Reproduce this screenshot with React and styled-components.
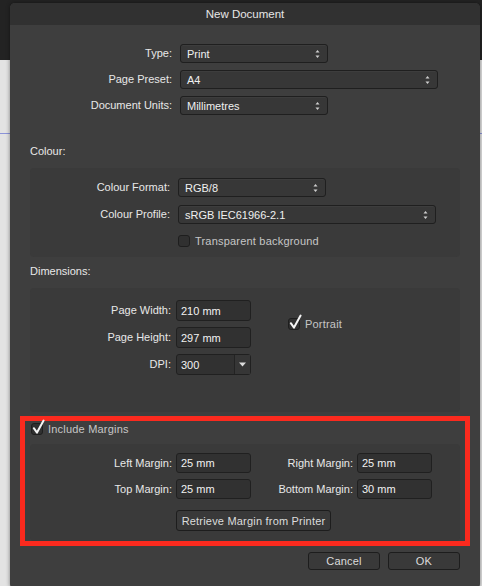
import React from "react";
import styled, { createGlobalStyle } from "styled-components";

const GlobalStyle = createGlobalStyle`
  html, body {
    margin: 0;
    padding: 0;
    background: #232323;
  }
  * { box-sizing: border-box; }
`;

const Backdrop = styled.div`
  width: 482px;
  height: 586px;
  overflow: hidden;
  padding: 3px 2px 0 10px;
  background: linear-gradient(
    to bottom,
    #232323 0 60px,
    #e3e3e3 60px 133px,
    #8b93d8 133px 134px,
    #e3e3e3 134px
  );
  font-family: "Liberation Sans", Arial, sans-serif;
  font-size: 11px;
`;

const Dialog = styled.div`
  width: 470px;
  height: 586px;
  background: #3e3e3e;
  border-radius: 5px;
  box-shadow: 0 0 4px rgba(0, 0, 0, 0.45);
  display: flex;
  flex-direction: column;
  overflow: hidden;
`;

const TitleBar = styled.div`
  height: 22px;
  flex: none;
  background: #313131;
  color: #e6e6e6;
  display: flex;
  align-items: center;
  justify-content: center;
  font-size: 11.5px;
`;

const Body = styled.div`
  display: flex;
  flex-direction: column;
  padding: 19px 20px 0;
`;

const FormGrid = styled.div`
  display: grid;
  grid-template-columns: ${(p) => p.$cols};
  column-gap: ${(p) => p.$colGap}px;
  row-gap: ${(p) => p.$rowGap}px;
  align-items: center;
  justify-items: start;
`;

const Label = styled.div`
  justify-self: end;
  color: #e8e8e8;
  white-space: nowrap;
  line-height: 13px;
`;

const SelectBox = styled.div`
  width: ${(p) => p.$width}px;
  height: 19px;
  background: #373737;
  border: 1px solid #1f1f1f;
  border-radius: 3px;
  color: #f0f0f0;
  display: flex;
  align-items: center;
  justify-content: space-between;
  padding: 0 7px 0 6px;
  box-shadow: inset 0 1px 0 rgba(255, 255, 255, 0.03);
`;

const SectionTitle = styled.div`
  margin-top: ${(p) => p.$top}px;
  margin-bottom: 10px;
  line-height: 14px;
  color: #e8e8e8;
`;

const GroupBox = styled.div`
  background: #3a3a3a;
  border-radius: 4px;
  padding: ${(p) => p.$pad};
  margin-top: ${(p) => p.$top || 0}px;
`;

const CheckRow = styled.label`
  display: flex;
  align-items: center;
  gap: 5px;
  height: 14px;
  color: #c6c6c6;
  letter-spacing: 0.2px;
  margin-top: ${(p) => p.$top || 0}px;
  margin-left: ${(p) => p.$left || 0}px;
  grid-row: ${(p) => p.$row || "auto"};
  grid-column: ${(p) => p.$col || "auto"};
`;

const Box = styled.span`
  position: relative;
  width: 12px;
  height: 12px;
  flex: none;
  background: #303030;
  border: 1px solid #1e1e1e;
  border-radius: 3px;
`;

const Tick = styled.svg`
  position: absolute;
  left: 0px;
  top: -4px;
  overflow: visible;
`;

const TextField = styled.div`
  width: 75px;
  height: ${(p) => p.$h || 21}px;
  background: #313131;
  border: 1px solid #202020;
  border-radius: 3px;
  color: #f2f2f2;
  display: flex;
  align-items: center;
  padding-left: 4px;
`;

const Combo = styled.div`
  width: 75px;
  height: 21px;
  background: #313131;
  border: 1px solid #202020;
  border-radius: 3px;
  color: #f2f2f2;
  display: flex;
  align-items: stretch;
`;

const ComboText = styled.div`
  flex: 1;
  display: flex;
  align-items: center;
  padding-left: 4px;
`;

const ComboButton = styled.div`
  width: 16px;
  border-left: 1px solid #232323;
  background: #363636;
  display: flex;
  align-items: center;
  justify-content: center;
`;

const Highlight = styled.div`
  margin: 4px -10px 0;
  border: 5px solid #fb2a1e;
  padding: 1px 5px 0;
  display: flex;
  flex-direction: column;
`;

const Button = styled.div`
  width: ${(p) => p.$width}px;
  height: ${(p) => p.$h}px;
  background: #393939;
  border: 1px solid #1d1d1d;
  border-radius: 3px;
  color: #dcdcdc;
  letter-spacing: 0.2px;
  display: flex;
  align-items: center;
  justify-content: center;
  grid-column: ${(p) => p.$col || "auto"};
  margin-top: ${(p) => p.$top || 0}px;
`;

const Footer = styled.div`
  display: flex;
  justify-content: flex-end;
  gap: 8px;
  margin-top: 6px;
`;

const UpDown = () => (
  <svg width="5" height="10" viewBox="0 0 5 10">
    <path d="M0.5 3.5 L2.5 1 L4.5 3.5 Z" fill="#cfcfcf" />
    <path d="M0.5 6.5 L2.5 9 L4.5 6.5 Z" fill="#cfcfcf" />
  </svg>
);

const Select = ({ width, children }) => (
  <SelectBox $width={width}>
    <span>{children}</span>
    <UpDown />
  </SelectBox>
);

const Check = ({ checked, children, ...rest }) => (
  <CheckRow {...rest}>
    <Box>
      {checked && (
        <Tick width="13" height="15" viewBox="0 0 13 15">
          <path
            d="M1.8 8.2 L5 12.6 L11.6 0.6"
            fill="none"
            stroke="#f4f4f4"
            strokeWidth="2"
            strokeLinecap="round"
            strokeLinejoin="round"
          />
        </Tick>
      )}
    </Box>
    <span>{children}</span>
  </CheckRow>
);

export default function App() {
  return (
    <>
      <GlobalStyle />
      <Backdrop>
        <Dialog>
          <TitleBar>New Document</TitleBar>
          <Body>
            <FormGrid $cols="142px auto" $colGap={8} $rowGap={7}>
              <Label>Type:</Label>
              <Select width={148}>Print</Select>
              <Label>Page Preset:</Label>
              <Select width={258}>A4</Select>
              <Label>Document Units:</Label>
              <Select width={148}>Millimetres</Select>
            </FormGrid>

            <SectionTitle $top={29}>Colour:</SectionTitle>
            <GroupBox $pad="10px 0 9px">
              <FormGrid $cols="140px auto" $colGap={8} $rowGap={8}>
                <Label>Colour Format:</Label>
                <Select width={148}>RGB/8</Select>
                <Label>Colour Profile:</Label>
                <Select width={258}>sRGB IEC61966-2.1</Select>
                <Check $col="2" $top={2}>Transparent background</Check>
              </FormGrid>
            </GroupBox>

            <SectionTitle $top={7}>Dimensions:</SectionTitle>
            <GroupBox $pad="12px 0 37px">
              <FormGrid $cols="141px 75px auto" $colGap={5} $rowGap={6}>
                <Label>Page Width:</Label>
                <TextField>210 mm</TextField>
                <Check checked $row="1 / 3" $col="3" $left={32}>
                  Portrait
                </Check>
                <Label>Page Height:</Label>
                <TextField>297 mm</TextField>
                <Label>DPI:</Label>
                <Combo>
                  <ComboText>300</ComboText>
                  <ComboButton>
                    <svg width="7" height="5" viewBox="0 0 7 5">
                      <path d="M0 0.5 L7 0.5 L3.5 4.5 Z" fill="#dcdcdc" />
                    </svg>
                  </ComboButton>
                </Combo>
              </FormGrid>
            </GroupBox>

            <Highlight>
              <Check checked $left={1}>Include Margins</Check>
              <GroupBox $pad="9px 0 10px" $top={8}>
                <FormGrid $cols="142px 75px 98px 75px" $colGap={4} $rowGap={6}>
                  <Label>Left Margin:</Label>
                  <TextField $h={20}>25 mm</TextField>
                  <Label>Right Margin:</Label>
                  <TextField $h={20}>25 mm</TextField>
                  <Label>Top Margin:</Label>
                  <TextField $h={20}>25 mm</TextField>
                  <Label>Bottom Margin:</Label>
                  <TextField $h={20}>30 mm</TextField>
                  <Button $width={155} $h={21} $col="2 / 5" $top={5}>
                    Retrieve Margin from Printer
                  </Button>
                </FormGrid>
              </GroupBox>
            </Highlight>

            <Footer>
              <Button $width={72} $h={18}>Cancel</Button>
              <Button $width={72} $h={18}>OK</Button>
            </Footer>
          </Body>
        </Dialog>
      </Backdrop>
    </>
  );
}
